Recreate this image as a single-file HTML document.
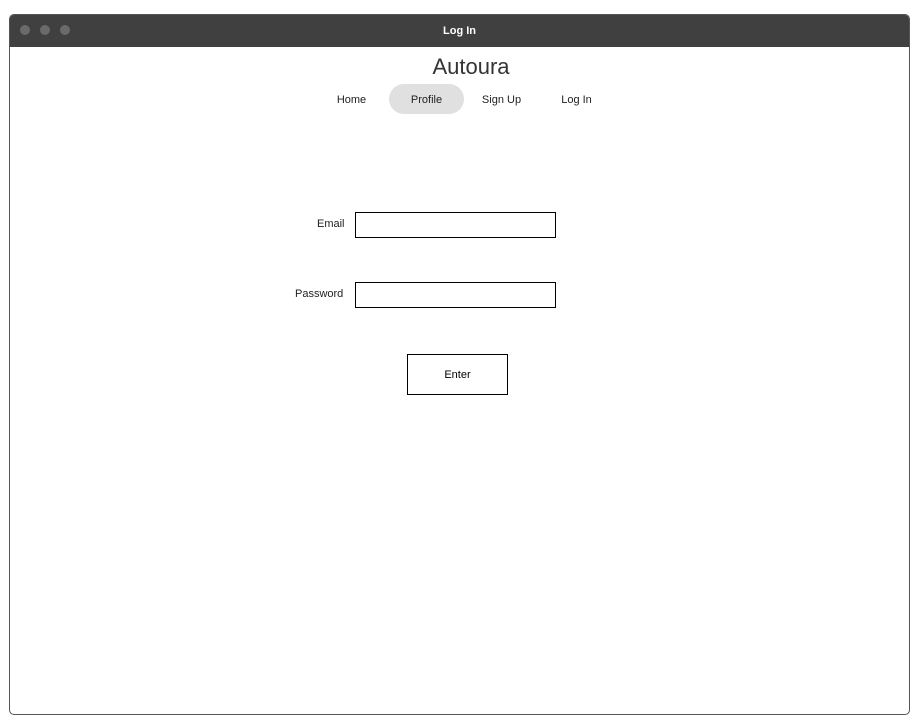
<!DOCTYPE html>
<html><head><style>
body{margin:0;width:922px;height:724px;background:#fff;font-family:"Liberation Sans",sans-serif;position:relative;overflow:hidden}
.win{position:absolute;left:9px;top:14px;width:899px;height:699px;border:1px solid #555;border-radius:5px;overflow:hidden}
.bar{position:absolute;left:0;top:0;width:100%;height:32px;background:#404040;color:#fff;font-weight:bold;font-size:11px;text-align:center;line-height:32px}
.dot{position:absolute;top:10px;width:10px;height:10px;border-radius:50%;background:#6a6a6a}
.a{position:absolute;font-size:12px;color:#222}
.t{position:absolute;left:20px;width:902px;top:54px;text-align:center;font-size:22px;color:#333}
.n{position:absolute;top:85px;width:75px;height:30px;line-height:30px;text-align:center;font-size:11px;color:#222}
.in{position:absolute;border:1px solid #000;background:#fff}
</style></head><body>
<div class="win"><div class="bar">Log In<div class="dot" style="left:10px"></div><div class="dot" style="left:30px"></div><div class="dot" style="left:50px"></div></div></div>
<div class="t">Autoura</div>
<div style="position:absolute;left:389px;top:84px;width:75px;height:30px;background:#e0e0e0;border-radius:15px"></div>
<div class="n" style="left:314px">Home</div>
<div class="n" style="left:389px">Profile</div>
<div class="n" style="left:464px">Sign Up</div>
<div class="n" style="left:539px">Log In</div>
<div class="a" style="left:317px;top:218px;font-size:11px">Email</div>
<div class="in" style="left:355px;top:212px;width:199px;height:24px"></div>
<div class="a" style="left:295px;top:288px;font-size:11px">Password</div>
<div class="in" style="left:355px;top:282px;width:199px;height:24px"></div>
<div class="in" style="left:407px;top:354px;width:99px;height:39px;text-align:center;line-height:41px;font-size:11px">Enter</div>
</body></html>
